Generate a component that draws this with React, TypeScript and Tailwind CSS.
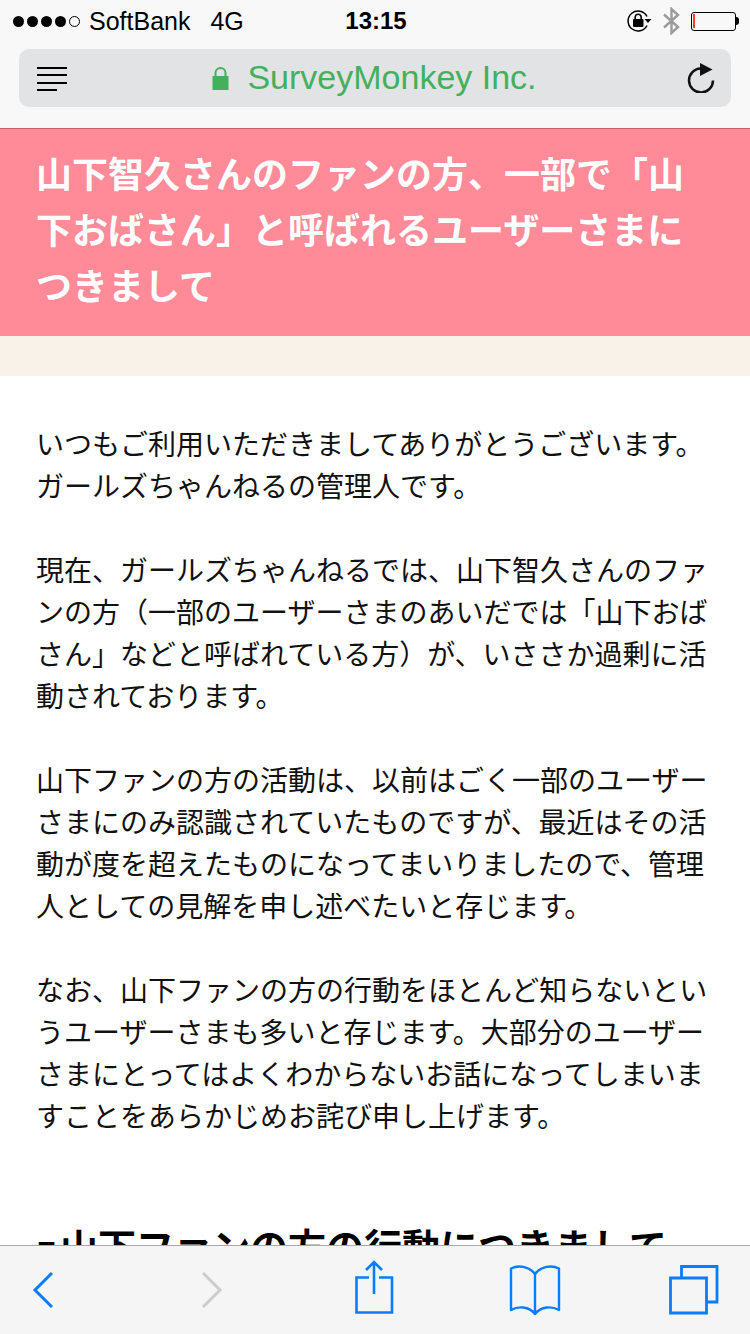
const cjk = "font-['Noto_Sans_CJK_JP','Noto_Sans_CJK_SC',sans-serif]";

const paragraphs = [
  ["いつもご利用いただきましてありがとうございます。", "ガールズちゃんねるの管理人です。"],
  [
    "現在、ガールズちゃんねるでは、山下智久さんのファ",
    "ンの方（一部のユーザーさまのあいだでは「山下おば",
    "さん」などと呼ばれている方）が、いささか過剰に活",
    "動されております。",
  ],
  [
    "山下ファンの方の活動は、以前はごく一部のユーザー",
    "さまにのみ認識されていたものですが、最近はその活",
    "動が度を超えたものになってまいりましたので、管理",
    "人としての見解を申し述べたいと存じます。",
  ],
  [
    "なお、山下ファンの方の行動をほとんど知らないとい",
    "うユーザーさまも多いと存じます。大部分のユーザー",
    "さまにとってはよくわからないお話になってしまいま",
    "すことをあらかじめお詫び申し上げます。",
  ],
];

function StatusBar() {
  return (
    <div className="flex h-[42px] items-center justify-between pl-[13px] pr-[11px] font-['Liberation_Sans',sans-serif] text-[25px] leading-none text-black">
      <div className="flex w-[300px] items-center">
        <div className="flex gap-[3px]">
          {[0, 1, 2, 3].map((i) => (
            <span key={i} className="h-[11px] w-[11px] rounded-full bg-black" />
          ))}
          <span className="h-[11px] w-[11px] rounded-full border border-black" />
        </div>
        <span className="ml-[9px]">SoftBank</span>
        <span className="ml-[20px]">4G</span>
      </div>
      <span className="text-[24px] font-bold">13:15</span>
      <div className="flex w-[300px] items-center justify-end gap-[11px]">
        <svg width="25" height="24" viewBox="0 0 25 24" fill="none">
          <path d="M20 7.5A10 10 0 1 0 20 16.5" stroke="#000" strokeWidth="1.5" />
          <path d="M17.5 10h7l-3.5 4z" fill="#000" />
          <rect x="6" y="10" width="10.5" height="8" rx="1" fill="#000" />
          <path d="M8.2 10.5V8.2a3 3 0 0 1 6 0V10.5" stroke="#000" strokeWidth="1.6" />
        </svg>
        <svg width="17" height="28" viewBox="0 0 17 28" fill="none" stroke="#9b9b9b" strokeWidth="2.4">
          <path d="M1 7.5 15 20 8.5 26V2L15 8 1 20.5" />
        </svg>
        <div className="flex items-center">
          <div className="flex h-[19px] w-[45px] items-center rounded-[3px] border border-black pl-[1px]">
            <span className="h-[14px] w-[2px] bg-[#ff3b30]" />
          </div>
          <span className="h-[8px] w-[3px] rounded-r-sm bg-black" />
        </div>
      </div>
    </div>
  );
}

function AddressBar() {
  return (
    <div className="px-[19px] pt-[7px]">
      <div className="flex h-[58px] items-center rounded-[10px] bg-[#e2e3e5] pl-[18px] pr-[16px]">
        <div className="flex w-[30px] flex-col gap-[5.5px] pt-[2px]">
          <span className="h-[2px] w-[30px] bg-black" />
          <span className="h-[2px] w-[30px] bg-black" />
          <span className="h-[2px] w-[30px] bg-black" />
          <span className="h-[2px] w-[20px] bg-black" />
        </div>
        <div className="flex flex-1 items-center justify-center gap-[18px] pr-[5px] font-['Liberation_Sans',sans-serif] text-[34px] leading-none text-[#44b05c]">
          <svg width="17" height="23" viewBox="0 0 17 23" className="mt-[1px]">
            <rect x="0.5" y="9" width="16" height="14" fill="#44b05c" />
            <path d="M3.5 10V6a5 5 0 0 1 10 0v4" fill="none" stroke="#44b05c" strokeWidth="2" />
          </svg>
          <span className="-mt-[2px]">SurveyMonkey Inc.</span>
        </div>
        <svg width="28" height="30" viewBox="0 0 28 30" fill="none">
          <path d="M13.5 5.5A12 12 0 1 0 26 17.5" stroke="#111" strokeWidth="2.5" />
          <path d="M13 0l12.5 6.5L13 13z" fill="#111" />
        </svg>
      </div>
    </div>
  );
}

function BottomBar() {
  return (
    <div className="absolute inset-x-0 bottom-0 flex h-[89px] items-start border-t border-[#a9a9a9] bg-[#f5f5f5] text-[#0a7dff]">
      <svg width="750" height="88" viewBox="0 0 750 88" fill="none" stroke="currentColor" strokeWidth="3">
        <path d="M52 27 35 44 52 61" />
        <path d="M203 27 220 44 203 61" stroke="#cdcdcd" />
        <path d="M369 31.5H356.5V66.5H392V31.5H379" strokeWidth="2.6" />
        <path d="M374 48V17M366 24 374 16 382 24" strokeWidth="2.6" />
        <path
          d="M535 28C529 20 518 19 511 22.5V64C518 60 529 60 535 68C541 60 552 60 559 64V22.5C552 19 541 20 535 28ZM535 28V68"
          strokeWidth="2.4"
          strokeLinejoin="round"
        />
        <path d="M670.5 32H706.5V67H670.5zM681.5 31V20.5H717V56H707" strokeWidth="2.8" />
      </svg>
    </div>
  );
}

export default function App() {
  return (
    <div className={`relative h-[1334px] w-[750px] overflow-hidden bg-white ${cjk}`}>
      <div className="h-[128px] bg-[#f8f8f8]">
        <StatusBar />
        <AddressBar />
      </div>
      <h1 className="h-[208px] border-t border-[#c9616f] bg-[#ff8a98] px-[36px] pt-[15px] text-[36px] font-bold leading-[56px] whitespace-nowrap text-white">
        山下智久さんのファンの方、一部で「山
        <br />
        下おばさん」と呼ばれるユーザーさまに
        <br />
        つきまして
      </h1>
      <div className="h-[40px] bg-[#f9f2e9]" />
      <main className="flex flex-col gap-[42px] px-[36px] pt-[46px] text-[28px] leading-[42px] whitespace-nowrap text-[#111]">
        {paragraphs.map((lines, i) => (
          <p key={i}>
            {lines.map((line) => (
              <span key={line} className="block">
                {line}
              </span>
            ))}
          </p>
        ))}
        <h2 className="mt-[39px] flex h-[56px] items-baseline text-[38px] leading-[56px] font-bold text-black">
          <span className="mr-[10px] inline-block origin-left -translate-y-[6px] scale-x-[1.5]">-</span>
          山下ファンの方の行動につきまして
        </h2>
      </main>
      <BottomBar />
    </div>
  );
}
